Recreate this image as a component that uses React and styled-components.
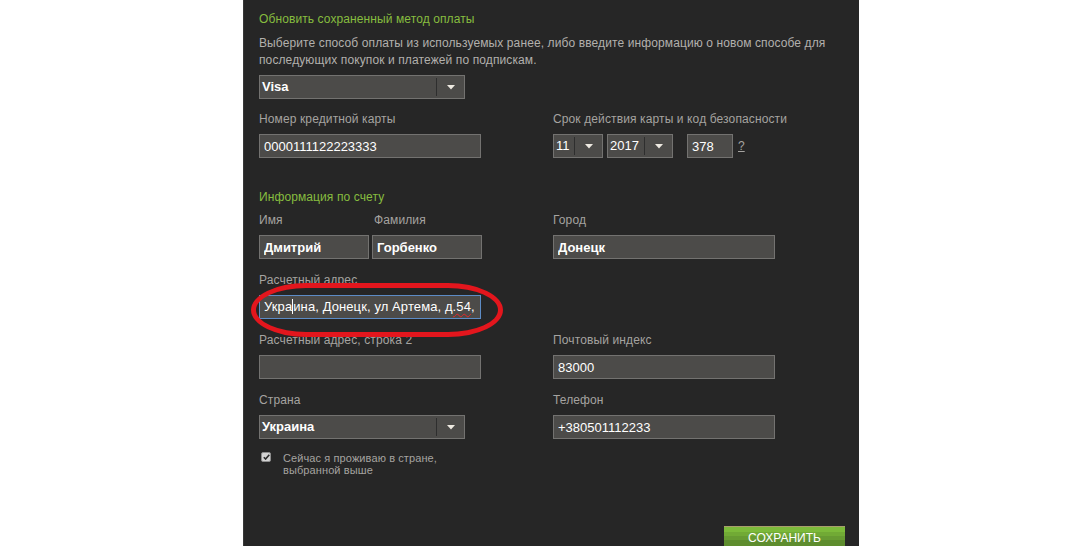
import styled, { createGlobalStyle } from "styled-components";

const GlobalStyle = createGlobalStyle`
  html, body {
    margin: 0;
    padding: 0;
    background: #fff;
  }
  body {
    font-family: "Liberation Sans", Arial, sans-serif;
    font-size: 12px;
  }
`;

const Page = styled.div`
  padding-left: 243px;
  height: 546px;
  overflow: hidden;
`;

const Panel = styled.div`
  position: relative;
  width: 616px;
  min-height: 546px;
  box-sizing: border-box;
  background: #262626;
  border-left: 1px solid #383838;
  padding: 11px 0 0 15px;
  display: flex;
  flex-direction: column;
`;

const SectionTitle = styled.div`
  color: #86bd3f;
  font-size: 12px;
  line-height: 16px;
  letter-spacing: 0.1px;
  margin-top: ${(p) => p.$top || 0}px;
`;

const Intro = styled.p`
  margin: 8px 0 0;
  color: #b2b0ad;
  font-size: 12px;
  line-height: 17px;
  letter-spacing: 0.11px;
  width: 590px;
`;

const FieldGrid = styled.div`
  display: grid;
  grid-template-columns: 294px 1fr;
  row-gap: 13px;
  margin-top: ${(p) => p.$top || 0}px;
`;

const Field = styled.div`
  display: flex;
  flex-direction: column;
`;

const Label = styled.div`
  color: #a5a3a0;
  font-size: 12px;
  line-height: 16px;
  letter-spacing: 0.12px;
  height: 16px;
  margin-bottom: 7px;
  padding-left: ${(p) => p.$indent || 0}px;
  white-space: nowrap;
`;

const Row = styled.div`
  display: flex;
  align-items: center;
  gap: ${(p) => p.$gap || 0}px;
  margin-top: ${(p) => p.$top || 0}px;
  margin-left: ${(p) => p.$left || 0}px;
`;

const TextInput = styled.input`
  box-sizing: border-box;
  width: ${(p) => p.$w}px;
  height: 24px;
  margin: 0;
  padding: 0 4px;
  background: #4c4b49;
  border: 1px solid #737270;
  color: #fff;
  font-family: "Liberation Sans", Arial, sans-serif;
  font-size: 13px;
  font-weight: ${(p) => (p.$bold ? "bold" : "normal")};
  outline: none;
`;

const FocusBox = styled.div`
  box-sizing: border-box;
  width: ${(p) => p.$w}px;
  height: 24px;
  padding: 0 4px;
  background: #4c4b49;
  border: 1px solid #5d8cc6;
  color: #fff;
  font-size: 13px;
  line-height: 22px;
  letter-spacing: 0.1px;
  white-space: nowrap;
  overflow: hidden;
`;

const Caret = styled.span`
  display: inline-block;
  width: 1px;
  height: 15px;
  background: #fff;
  vertical-align: -3px;
`;

const Misspelled = styled.span`
  text-decoration: underline wavy #e5262b;
  text-decoration-thickness: 1px;
  text-underline-offset: 2px;
`;

const SelectBox = styled.div`
  box-sizing: border-box;
  width: ${(p) => p.$w}px;
  height: 24px;
  display: flex;
  background: #4c4b49;
  border: 1px solid #737270;
  color: #fff;
  font-size: 13px;
  font-weight: ${(p) => (p.$bold ? "bold" : "normal")};
`;

const SelectValue = styled.div`
  flex: 1;
  padding-left: 2px;
  line-height: 22px;
  white-space: nowrap;
`;

const ArrowBox = styled.div`
  width: 27px;
  margin: 2px 0;
  border-left: 1px solid #2e2e2e;
  display: flex;
  align-items: center;
  justify-content: center;
`;

const Help = styled.span`
  color: #a5a3a0;
  font-size: 12px;
  text-decoration: underline;
  margin-left: 5px;
`;

const CheckRow = styled.label`
  display: flex;
  align-items: flex-start;
  margin-top: 13px;
  color: #a5a3a0;
  font-size: 11px;
  line-height: 12px;
  letter-spacing: 0.1px;
`;

const CheckBox = styled.span`
  box-sizing: border-box;
  width: 10px;
  height: 10px;
  margin: 0 12px 0 2px;
  border-radius: 2px;
  background: #d4d4d4;
  border: 1px solid #8d8d8d;
  display: flex;
  align-items: center;
  justify-content: center;
`;

const Footer = styled.div`
  display: flex;
  justify-content: flex-end;
  padding-right: 14px;
  margin-top: 50px;
`;

const SaveButton = styled.button`
  width: 121px;
  height: 25px;
  padding: 1px 0 0;
  border: 0;
  border-top: 1px solid #a89e6c;
  background: linear-gradient(
    #7cba3a 0,
    #7cba3a 5px,
    #71aa35 5px,
    #71aa35 9px,
    #679b32 9px,
    #679b32 13px,
    #5e8d2e 13px
  );
  color: #fff;
  font-family: "Liberation Sans", Arial, sans-serif;
  font-size: 12px;
  line-height: 20px;
  display: flex;
  justify-content: center;
`;

const Marker = styled.div`
  position: absolute;
  left: 7px;
  top: 283px;
  width: 252px;
  height: 54px;
  box-sizing: border-box;
  border: 5px solid #e3161d;
  border-radius: 55px / 27px;
  pointer-events: none;
`;

const Arrow = () => (
  <svg width="8" height="5" viewBox="0 0 8 5">
    <path d="M0 0h8L4 4.5z" fill="#eeeae2" />
  </svg>
);

const Select = ({ w, value, bold }) => (
  <SelectBox $w={w} $bold={bold}>
    <SelectValue>{value}</SelectValue>
    <ArrowBox>
      <Arrow />
    </ArrowBox>
  </SelectBox>
);

export default function App() {
  return (
    <>
      <GlobalStyle />
      <Page>
        <Panel>
          <SectionTitle>Обновить сохраненный метод оплаты</SectionTitle>
          <Intro>
            Выберите способ оплаты из используемых ранее, либо введите информацию о новом способе для
            последующих покупок и платежей по подпискам.
          </Intro>
          <Row $top={6}>
            <Select w={206} value="Visa" bold />
          </Row>

          <FieldGrid $top={12}>
            <Field>
              <Label>Номер кредитной карты</Label>
              <TextInput $w={222} readOnly value="0000111122223333" />
            </Field>
            <Field>
              <Label>Срок действия карты и код безопасности</Label>
              <Row>
                <Select w={50} value="11" />
                <Row $left={4}>
                  <Select w={66} value="2017" />
                </Row>
                <Row $left={14}>
                  <TextInput $w={46} readOnly value="378" />
                  <Help>?</Help>
                </Row>
              </Row>
            </Field>
          </FieldGrid>

          <SectionTitle $top={31}>Информация по счету</SectionTitle>

          <FieldGrid $top={7}>
            <Row $gap={3}>
              <Field>
                <Label>Имя</Label>
                <TextInput $w={110} $bold readOnly value="Дмитрий" />
              </Field>
              <Field>
                <Label $indent={2}>Фамилия</Label>
                <TextInput $w={110} $bold readOnly value="Горбенко" />
              </Field>
            </Row>
            <Field>
              <Label>Город</Label>
              <TextInput $w={222} $bold readOnly value="Донецк" />
            </Field>

            <Field>
              <Label>Расчетный адрес</Label>
              <FocusBox $w={222}>
                Укра<Caret />ина, Донецк, ул Артема, <Misspelled>д.54</Misspelled>,
              </FocusBox>
            </Field>
            <div />

            <Field>
              <Label>Расчетный адрес, строка 2</Label>
              <TextInput $w={222} readOnly value="" />
            </Field>
            <Field>
              <Label>Почтовый индекс</Label>
              <TextInput $w={222} readOnly value="83000" />
            </Field>

            <Field>
              <Label>Страна</Label>
              <Select w={206} value="Украина" bold />
            </Field>
            <Field>
              <Label>Телефон</Label>
              <TextInput $w={222} readOnly value="+380501112233" />
            </Field>
          </FieldGrid>

          <CheckRow>
            <CheckBox>
              <svg width="7" height="6" viewBox="0 0 7 6">
                <path d="M0.8 3.2L2.6 5 6.3 0.8" fill="none" stroke="#2b2b2b" strokeWidth="1.6" />
              </svg>
            </CheckBox>
            <span>
              Сейчас я проживаю в стране,
              <br />
              выбранной выше
            </span>
          </CheckRow>

          <Footer>
            <SaveButton>СОХРАНИТЬ</SaveButton>
          </Footer>

          <Marker />
        </Panel>
      </Page>
    </>
  );
}
